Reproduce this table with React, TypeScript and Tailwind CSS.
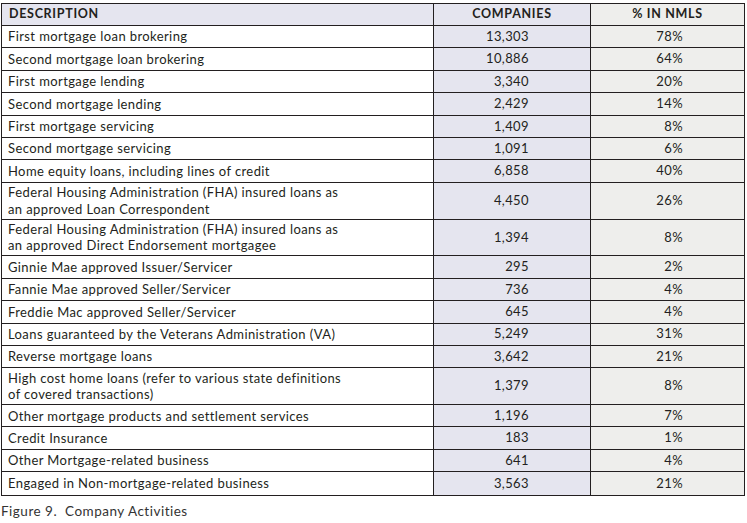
const rows = [
  { label: ["First mortgage loan brokering"], companies: "13,303", pct: "78%" },
  { label: ["Second mortgage loan brokering"], companies: "10,886", pct: "64%" },
  { label: ["First mortgage lending"], companies: "3,340", pct: "20%" },
  { label: ["Second mortgage lending"], companies: "2,429", pct: "14%" },
  { label: ["First mortgage servicing"], companies: "1,409", pct: "8%" },
  { label: ["Second mortgage servicing"], companies: "1,091", pct: "6%" },
  { label: ["Home equity loans, including lines of credit"], companies: "6,858", pct: "40%" },
  {
    label: ["Federal Housing Administration (FHA) insured loans as", "an approved Loan Correspondent"],
    companies: "4,450",
    pct: "26%",
  },
  {
    label: ["Federal Housing Administration (FHA) insured loans as", "an approved Direct Endorsement mortgagee"],
    companies: "1,394",
    pct: "8%",
  },
  { label: ["Ginnie Mae approved Issuer/Servicer"], companies: "295", pct: "2%" },
  { label: ["Fannie Mae approved Seller/Servicer"], companies: "736", pct: "4%" },
  { label: ["Freddie Mac approved Seller/Servicer"], companies: "645", pct: "4%" },
  { label: ["Loans guaranteed by the Veterans Administration (VA)"], companies: "5,249", pct: "31%" },
  { label: ["Reverse mortgage loans"], companies: "3,642", pct: "21%" },
  {
    label: ["High cost home loans (refer to various state definitions", "of covered transactions)"],
    companies: "1,379",
    pct: "8%",
  },
  { label: ["Other mortgage products and settlement services"], companies: "1,196", pct: "7%" },
  { label: ["Credit Insurance"], companies: "183", pct: "1%" },
  { label: ["Other Mortgage-related business"], companies: "641", pct: "4%" },
  { label: ["Engaged in Non-mortgage-related business"], companies: "3,563", pct: "21%" },
];

export default function App() {
  return (
    <div className="h-[523px] w-[747px] bg-white font-['Lato',sans-serif] text-[13px] tracking-[0.4px] text-[#231f20]">
      <div className="pl-[1px] pt-[3px]">
        <div className="w-[744px] border border-[#231f20]">
          <div className="flex h-[22px] border-b border-[#231f20] text-[12.5px] font-bold tracking-[0.7px]">
            <div className="flex w-[431px] items-center bg-[#e5e5ef] pl-[7px]">DESCRIPTION</div>
            <div className="flex w-[157px] items-center justify-center border-l border-[#231f20] bg-[#e5e5ef]">
              COMPANIES
            </div>
            <div className="flex flex-1 items-center justify-center border-l border-[#231f20] bg-[#eeeeec]">
              % IN NMLS
            </div>
          </div>
          {rows.map((r, i) => (
            <div
              key={i}
              className={`flex ${r.label.length > 1 ? "h-[36.8px]" : "h-[22.4px]"} ${
                i < rows.length - 1 ? "border-b border-[#231f20]" : ""
              }`}
            >
              <div className="flex w-[431px] flex-col justify-center bg-white pl-[6px] leading-[16.5px]">
                {r.label.map((l) => (
                  <span key={l}>{l}</span>
                ))}
              </div>
              <div className="flex w-[157px] items-center justify-end border-l border-[#231f20] bg-[#e5e5ef] pr-[61px]">
                {r.companies}
              </div>
              <div className="flex flex-1 items-center justify-end border-l border-[#231f20] bg-[#eeeeec] pr-[61px]">
                {r.pct}
              </div>
            </div>
          ))}
        </div>
      </div>
      <div className="mt-[5px] pl-[1px] text-[13.5px] tracking-[0.5px] text-[#333]">Figure 9.&nbsp; Company Activities</div>
    </div>
  );
}
